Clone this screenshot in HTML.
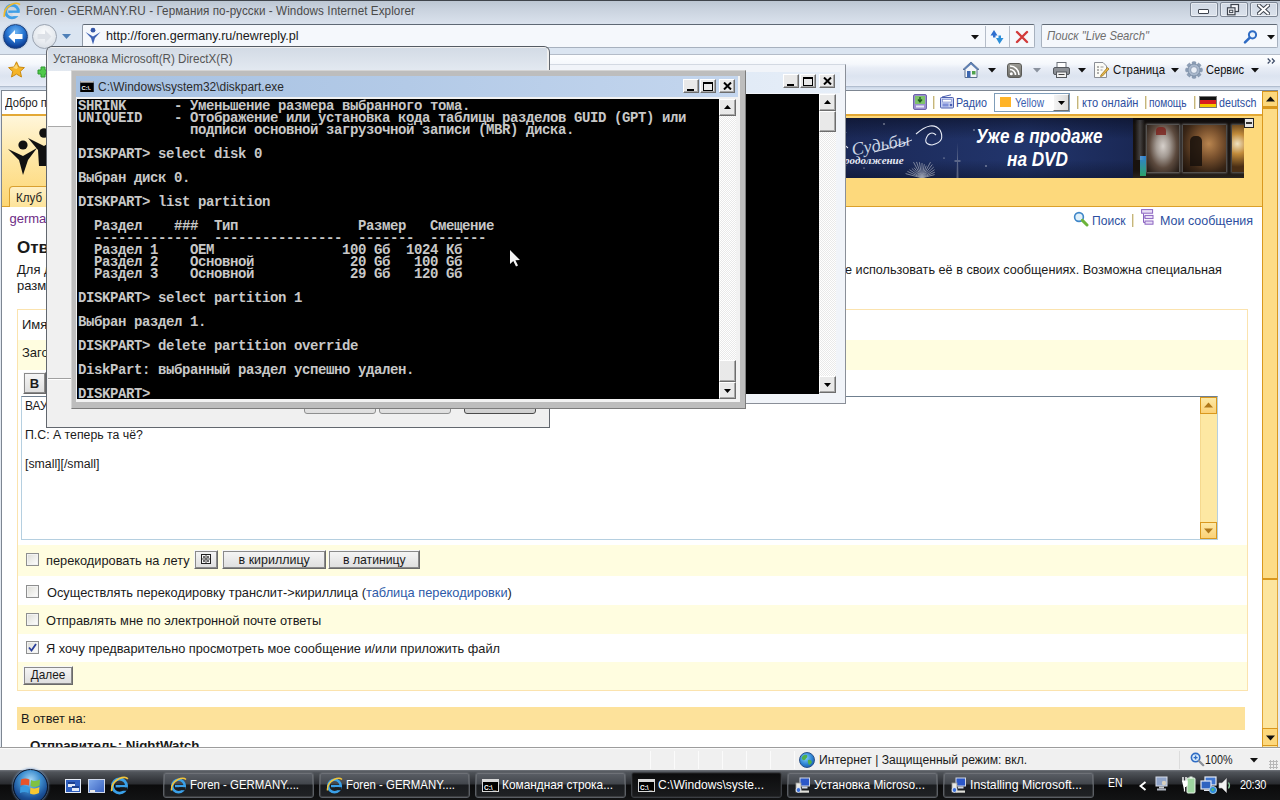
<!DOCTYPE html>
<html>
<head>
<meta charset="utf-8">
<title>Foren - GERMANY.RU</title>
<style>
*{box-sizing:border-box;margin:0;padding:0}
html,body{width:1280px;height:800px;overflow:hidden;background:#fff;font-family:"Liberation Sans",sans-serif;font-size:12px;color:#000}
.abs{position:absolute}
#ie{position:absolute;left:0;top:0;width:1280px;height:770px;background:#fff;overflow:hidden}
/* IE chrome */
#ietitle{left:0;top:0;width:1280px;height:22px;background:linear-gradient(#bcc6d2 0,#c9d2de 8px,#d9e1ec 22px);border-top:1px solid #3f444b}
#ietitle .t{left:26px;top:2px;font-size:13px;color:#4a4a4a;white-space:nowrap;letter-spacing:.1px}
.capbtn{top:1px;height:15px;width:28px;border:1px solid #7c8694;border-radius:2px;background:linear-gradient(#cfd8e3,#dbe2ec);box-shadow:inset 0 0 0 1px rgba(255,255,255,.45)}
#ienav{left:0;top:22px;width:1280px;height:30px;background:linear-gradient(#d9e1ec 0,#dbe5f1 6px,#dbe5f1 30px)}
#ietool{left:0;top:52px;width:1280px;height:38px;background:linear-gradient(#dbe5f1 0,#dbe5f1 2px,#b4bcc8 2px,#b4bcc8 3px,#fdfeff 3px,#f5f8fc 12px,#e8edf6 16px,#dce4f0 24px,#e4eaf5 32px,#e9eef7 34px)}
.box{background:#f5f8fc;border:1px solid #a3adba;border-radius:2px}
.ct{font-size:13px;color:#111;white-space:nowrap}
/* page */
#page{left:0;top:0;width:1280px;height:748px;background:#fff;overflow:hidden}
.pt{font-size:13px;color:#1a1a1a;white-space:nowrap}
.lk{font-size:13px;color:#2d4fa0;white-space:nowrap}
.sep{width:2px;height:13px;background:linear-gradient(90deg,#c4b57c 0,#c4b57c 1px,#ece3c2 1px)}
.row{left:18px;width:1229px;background:#fffde0}
.btn{background:linear-gradient(#f6f6f6,#dedede);border:1px solid;border-color:#f8f8f8 #6a6a6a #6a6a6a #f8f8f8;outline:1px solid #8a8a8a;outline-offset:-2px;font-size:13px;text-align:center;color:#1a1a1a;white-space:nowrap;line-height:16px}
.cb{width:13px;height:13px;background:linear-gradient(135deg,#dcdcd6,#fff);border:1px solid #8e8f8f;box-shadow:inset 0 0 0 1px #f2f2f2}
.sbb{width:17px;height:17px;background:linear-gradient(#fde9a6,#fbd176);border:1px solid #d9981e}
#status{left:0;top:748px;width:1280px;height:22px;background:#f0f0f0;border-top:1px solid #fbfbfb;box-shadow:0 -1px 0 #9c9c9c;z-index:2}
#taskbar{left:0;top:770px;width:1280px;height:30px;background:linear-gradient(#70747b 0,#50545a 2px,#3c3f44 8px,#292b2f 14px,#0b0b0c 15px,#121314 30px)}
.tb{top:2px;width:151px;height:26px;border:1px solid #5a5e64;border-radius:3px;background:linear-gradient(#5b5f66 0,#42464c 11px,#1a1c1f 12px,#212326 26px);box-shadow:inset 0 0 0 1px rgba(255,255,255,.12);color:#fff;font-size:13px;white-space:nowrap;overflow:hidden}
.tb span{position:absolute;left:26px;top:4px}
.tb .ti{position:absolute;left:6px;top:4px}
.tb.act{background:linear-gradient(#0c0c0d,#1a1b1d);border-color:#3c3f44;box-shadow:inset 0 0 0 1px rgba(255,255,255,.06)}
.wb{width:16px;height:14px;background:#e9e9e9;border:1px solid;border-color:#fff #6d6d6d #6d6d6d #fff;box-shadow:inset -1px -1px 0 #a8a8a8}
.dxb{width:72px;height:22px;border:1px solid #8e8f8f;border-radius:3px;background:linear-gradient(#f4f4f4,#dedede)}
#ietitle,#ienav,#ietool,#chromesep{z-index:2}
/* cmd */
.con{background:#000;color:#c8c8c8;font-family:"Liberation Mono",monospace;font-weight:bold;font-size:14px;letter-spacing:-.4px;line-height:12px;white-space:pre;overflow:hidden}
</style>
</head>
<body>
<div id="ie">
  <div id="ietitle" class="abs"><div class="t abs" style="left:26px;transform-origin:0 0;transform:scaleX(0.896)">Foren - GERMANY.RU - Германия по-русски - Windows Internet Explorer</div>
    <div class="capbtn abs" style="left:1190px"></div><div class="capbtn abs" style="left:1220px"></div><div class="capbtn abs" style="left:1250px"></div>
    <div class="abs" style="left:1198px;top:8px;width:11px;height:5px;background:#fff;border:1px solid #3e444e;border-radius:1px"></div>
    <svg class="abs" style="left:1226px;top:2px" width="14" height="13" viewBox="0 0 14 13"><rect x="5" y="1.5" width="7.5" height="7" fill="#f4f6f9" stroke="#3e444e" stroke-width="1.2"/><rect x="1.5" y="4.8" width="7.5" height="7" fill="#f4f6f9" stroke="#3e444e" stroke-width="1.2"/><rect x="3.6" y="7.2" width="3.2" height="2.4" fill="none" stroke="#3e444e" stroke-width="1"/></svg>
    <svg class="abs" style="left:1257px;top:3px" width="13" height="11" viewBox="0 0 13 11"><path d="M2 1.5 L11 9.5 M11 1.5 L2 9.5" stroke="#3e444e" stroke-width="4" stroke-linecap="square"/><path d="M2 1.5 L11 9.5 M11 1.5 L2 9.5" stroke="#fff" stroke-width="2" stroke-linecap="square"/></svg>
    <svg class="abs" style="left:3px;top:1px" width="18" height="18" viewBox="0 0 17 17"><circle cx="8.5" cy="9" r="6" fill="none" stroke="#3f9fe6" stroke-width="2.8"/><rect x="5" y="8" width="9" height="2.3" fill="#3f9fe6"/><rect x="9" y="10.3" width="7" height="3" fill="#dde3eb"/><path d="M1.2 14 Q0.5 6 8 2.3 Q13.5 0 16 2.5" fill="none" stroke="#f0b92e" stroke-width="1.6"/></svg>
  </div>
  <div id="ienav" class="abs">
    <!-- back -->
    <div class="abs" style="left:3px;top:2px;width:25px;height:25px;border-radius:50%;background:radial-gradient(circle at 50% 30%,#6fb4f0 0,#2a7ad6 40%,#0d3f96 75%,#0a2f78 100%);border:1px solid #1b3f7a;box-shadow:0 0 0 1px #c5d2e4"></div>
    <svg class="abs" style="left:3px;top:2px" width="25" height="25" viewBox="0 0 25 25"><path d="M5.5 12.5 L12 6 L12 10 L19.5 10 L19.5 15 L12 15 L12 19 Z" fill="#fff"/></svg>
    <!-- forward -->
    <div class="abs" style="left:32px;top:2px;width:25px;height:25px;border-radius:50%;background:radial-gradient(circle at 50% 35%,#fbfcfd 0,#e6eaef 55%,#cfd5dd 100%);border:1px solid #9aa3b0"></div>
    <svg class="abs" style="left:32px;top:2px" width="25" height="25" viewBox="0 0 25 25"><path d="M19.5 12.5 L13 6 L13 10 L5.5 10 L5.5 15 L13 15 L13 19 Z" fill="#dde1e7"/></svg>
    <svg class="abs" style="left:62px;top:12px" width="9" height="6"><path d="M0 0 L9 0 L4.5 5 Z" fill="#4f80b8"/></svg>
    <!-- address -->
    <div class="abs box" style="left:82px;top:2px;width:953px;height:24px;border-color:#5f6975 #a7b1be #a7b1be #8e98a6"></div>
    <svg class="abs" style="left:85px;top:5px" width="16" height="18" viewBox="0 0 16 18"><circle cx="8" cy="3.2" r="2.4" fill="#3557a8"/><path d="M0.5 5 L8 9.5 L15.5 5 L10 11 L8 17.5 L6 11 Z" fill="#3f63b5"/></svg>
    <div class="abs" style="left:106px;top:6px;font-size:13px;color:#1a1a1a;white-space:nowrap;transform-origin:0 0;transform:scaleX(0.968)">http://foren.germany.ru/newreply.pl</div>
    <svg class="abs" style="left:971px;top:13px" width="9" height="5"><path d="M0 0 L8 0 L4 4.5 Z" fill="#111"/></svg>
    <div class="abs" style="left:985px;top:4px;width:1px;height:21px;background:#b5bdc9"></div>
    <div class="abs" style="left:1009px;top:4px;width:1px;height:21px;background:#b5bdc9"></div>
    <svg class="abs" style="left:989px;top:7px" width="16" height="16" viewBox="0 0 16 16"><path d="M5 1 L1.5 6.5 L4 6.5 L4 8.5 L6.5 8.5 L6.5 6.5 L8.5 6.5 Z" fill="#2f6fcf"/><path d="M10.5 15 L14.5 9 L12 9 L12 6.5 L9.5 6.5 L9.5 9 L7 9 Z" fill="#2c8fd9"/></svg>
    <svg class="abs" style="left:1015px;top:8px" width="14" height="14" viewBox="0 0 14 14"><path d="M2 2 L12 12 M12 2 L2 12" stroke="#d23a3a" stroke-width="2.4" stroke-linecap="round"/></svg>
    <!-- search -->
    <div class="abs box" style="left:1041px;top:2px;width:237px;height:24px;border-color:#5f6975 #a7b1be #a7b1be #a7b1be"></div>
    <div class="abs" style="left:1047px;top:6px;font-size:13px;font-style:italic;color:#6d6d6d;white-space:nowrap;transform-origin:0 0;transform:scaleX(0.864)">Поиск "Live Search"</div>
    <svg class="abs" style="left:1243px;top:7px" width="16" height="16" viewBox="0 0 16 16"><circle cx="9.5" cy="5.8" r="3.6" fill="#eaf3fc" stroke="#2f6cc4" stroke-width="2"/><path d="M6.8 8.6 L2 13.4" stroke="#2f6cc4" stroke-width="2.6" stroke-linecap="round"/></svg>
    <svg class="abs" style="left:1267px;top:13px" width="8" height="5"><path d="M0 0 L8 0 L4 4.5 Z" fill="#111"/></svg>
  </div>
  <div id="ietool" class="abs">
    <svg class="abs" style="left:8px;top:9px" width="17" height="17" viewBox="0 0 17 17"><path d="M8.5 0.8 L10.9 6 L16.4 6.6 L12.3 10.4 L13.5 16 L8.5 13.1 L3.5 16 L4.7 10.4 L0.6 6.6 L6.1 6 Z" fill="#f5b427" stroke="#c98a12" stroke-width="1" stroke-linejoin="round"/><path d="M8.5 3 L10 6.8 L8.5 8 L5 7 Z" fill="#fbe08a" opacity=".8"/></svg>
    <svg class="abs" style="left:37px;top:14px" width="12" height="12" viewBox="0 0 12 12"><path d="M4 1 L8 1 L8 4 L11 4 L11 8 L8 8 L8 11 L4 11 L4 8 L1 8 L1 4 L4 4 Z" fill="#4fc94a" stroke="#2f9a2f" stroke-width="1"/></svg>
    <!-- command bar -->
    <svg class="abs" style="left:962px;top:9px" width="18" height="18" viewBox="0 0 18 18"><path d="M9 1 L17 8.5 L15 8.5 L15 16.5 L3 16.5 L3 8.5 L1 8.5 Z" fill="#f4f6f9" stroke="#5b6f8c" stroke-width="1"/><path d="M9 1 L17 8.5 L14.5 8.5 L9 3.6 L3.5 8.5 L1 8.5 Z" fill="#5d7fb3"/><rect x="5" y="10" width="3.5" height="6.5" fill="#3b66b0"/><rect x="10" y="10" width="3.5" height="3.5" fill="#4fa24c"/></svg>
    <svg class="abs tri" style="left:988px;top:16px" width="8" height="5"><path d="M0 0 L8 0 L4 4.5 Z" fill="#111"/></svg>
    <div class="abs" style="left:1007px;top:11px;width:15px;height:15px;border-radius:3px;background:linear-gradient(#9a9a94,#6d6d68);border:1px solid #5a5a56"></div>
    <svg class="abs" style="left:1007px;top:11px" width="15" height="15" viewBox="0 0 15 15"><circle cx="4.3" cy="10.7" r="1.5" fill="#fff"/><path d="M3 6.5 A5.5 5.5 0 0 1 8.5 12" fill="none" stroke="#fff" stroke-width="1.6"/><path d="M3 3 A9 9 0 0 1 12 12" fill="none" stroke="#fff" stroke-width="1.6"/></svg>
    <svg class="abs" style="left:1033px;top:16px" width="8" height="5"><path d="M0 0 L8 0 L4 4.5 Z" fill="#8a929e"/></svg>
    <svg class="abs" style="left:1052px;top:9px" width="19" height="18" viewBox="0 0 19 18"><rect x="5" y="1.5" width="9" height="6" fill="#fff" stroke="#6b7078" stroke-width="1"/><rect x="1.5" y="6.5" width="16" height="7" rx="1.5" fill="#8c9096" stroke="#55595f" stroke-width="1"/><rect x="4.5" y="11" width="10" height="5.5" fill="#f2f2f2" stroke="#55595f" stroke-width="1"/><rect x="6.5" y="13" width="6" height="1" fill="#444"/></svg>
    <svg class="abs" style="left:1078px;top:16px" width="8" height="5"><path d="M0 0 L8 0 L4 4.5 Z" fill="#111"/></svg>
    <svg class="abs" style="left:1092px;top:9px" width="18" height="18" viewBox="0 0 18 18"><path d="M2.5 1.5 L11 1.5 L14.5 5 L14.5 16.5 L2.5 16.5 Z" fill="#fbfbf6" stroke="#8b8f96" stroke-width="1"/><path d="M5 6 h2 M5 9 h2 M5 12 h2" stroke="#666" stroke-width="1.2"/><path d="M8.5 6 h3 M8.5 9 h2" stroke="#999" stroke-width="1"/><path d="M9 14 L15.5 6.5 L17 8 L10.5 15 L8.5 15.5 Z" fill="#e7b84a" stroke="#9a7320" stroke-width=".8"/></svg>
    <div class="abs ct" style="left:1113px;top:10px;transform-origin:0 0;transform:scaleX(0.883)">Страница</div>
    <svg class="abs" style="left:1171px;top:16px" width="8" height="5"><path d="M0 0 L8 0 L4 4.5 Z" fill="#111"/></svg>
    <svg class="abs" style="left:1185px;top:9px" width="18" height="18" viewBox="0 0 18 18"><g transform="translate(9 9)"><g fill="#8ea0b8" stroke="#6c7f98" stroke-width=".5"><rect x="-1.8" y="-8.3" width="3.6" height="16.6" rx=".8"/><rect x="-1.8" y="-8.3" width="3.6" height="16.6" rx=".8" transform="rotate(45)"/><rect x="-1.8" y="-8.3" width="3.6" height="16.6" rx=".8" transform="rotate(90)"/><rect x="-1.8" y="-8.3" width="3.6" height="16.6" rx=".8" transform="rotate(135)"/></g><circle r="6" fill="#a9b8cc" stroke="#6c7f98" stroke-width=".6"/><circle r="3.4" fill="#e9eef6" stroke="#7d8fa8" stroke-width=".8"/></g></svg>
    <div class="abs ct" style="left:1206px;top:10px;transform-origin:0 0;transform:scaleX(0.853)">Сервис</div>
    <svg class="abs" style="left:1251px;top:16px" width="8" height="5"><path d="M0 0 L8 0 L4 4.5 Z" fill="#111"/></svg>
    <svg class="abs" style="left:1267px;top:6px" width="9" height="6" viewBox="0 0 9 6"><path d="M.7 .5 L3.2 3 L.7 5.5 M4.9 .5 L7.4 3 L4.9 5.5" fill="none" stroke="#3c4a66" stroke-width="1.2"/></svg>
  </div>
  <div id="chromesep" class="abs" style="left:0;top:86px;width:1280px;height:4px;background:linear-gradient(#9aa7b9 0,#c9d5e6 1px,#dfe8f4 4px)"></div>
  <div id="page" class="abs">
    <!-- top white row -->
    <div class="abs pt" style="left:5px;top:96px;font-size:12px;transform-origin:0 0;transform:scaleX(0.929)">Добро пожаловать</div>
    <svg class="abs" style="left:913px;top:94px" width="14" height="16" viewBox="0 0 14 16"><rect x=".5" y=".5" width="13" height="15" rx="1.5" fill="#9b8fd0" stroke="#6d63a8"/><rect x="2" y="2" width="10" height="8" fill="#7fc36a"/><path d="M7 3 v4 M5 5.5 L7 8 L9 5.5" stroke="#1e5a1e" stroke-width="1.4" fill="none"/><rect x="3" y="11.5" width="8" height="2" fill="#e8e6f6"/></svg>
    <div class="abs sep" style="left:933px;top:96px"></div>
    <svg class="abs" style="left:940px;top:94px" width="14" height="15" viewBox="0 0 14 15"><path d="M2 3 L11 .8" stroke="#4b5fb0" stroke-width="1"/><rect x=".5" y="3.5" width="13" height="10.5" rx="1" fill="#c9d2f2" stroke="#4b5fb0"/><rect x="2.5" y="5.5" width="9" height="2.5" fill="#fff" stroke="#6f80c8" stroke-width=".6"/><rect x="2.5" y="9.5" width="6" height="3" fill="#7f8fd8"/><circle cx="11" cy="11" r="1.3" fill="#4b5fb0"/></svg>
    <div class="abs lk" style="left:956px;top:95px;transform-origin:0 0;transform:scaleX(0.826)">Радио</div>
    <div class="abs" style="left:994px;top:93px;width:76px;height:19px;background:#fff;border:1px solid #7f9db9"></div>
    <div class="abs" style="left:1000px;top:97px;width:11px;height:10px;background:#ffb428"></div>
    <div class="abs lk" style="left:1015px;top:95px;color:#3a5fb0;transform-origin:0 0;transform:scaleX(0.781)">Yellow</div>
    <div class="abs" style="left:1053px;top:94px;width:16px;height:17px;background:linear-gradient(90deg,#f4f4f4,#dcdcdc);border:1px solid;border-color:#fff #707070 #707070 #fff"></div>
    <svg class="abs" style="left:1058px;top:101px" width="7" height="4"><path d="M0 0 L7 0 L3.5 4 Z" fill="#000"/></svg>
    <div class="abs sep" style="left:1077px;top:96px"></div>
    <div class="abs lk" style="left:1082px;top:95px;transform-origin:0 0;transform:scaleX(0.854)">кто онлайн</div>
    <div class="abs sep" style="left:1145px;top:96px"></div>
    <div class="abs lk" style="left:1149px;top:95px;transform-origin:0 0;transform:scaleX(0.783)">помощь</div>
    <div class="abs sep" style="left:1194px;top:96px"></div>
    <div class="abs" style="left:1199px;top:96px;width:18px;height:12px;background:linear-gradient(#111 0,#111 33%,#d81e1e 33%,#d81e1e 66%,#f5c800 66%);border:1px solid #777"></div>
    <div class="abs lk" style="left:1219px;top:95px;transform-origin:0 0;transform:scaleX(0.823)">deutsch</div>
    <!-- header -->
    <div class="abs" style="left:2px;top:114px;width:1260px;height:93px;background:#fdd97c;border-top:2px solid #e3a835;border-bottom:1px solid #dba02a"></div>
    <div class="abs" style="left:2px;top:116px;width:300px;height:90px;background:linear-gradient(#fff6da 0,#fee7a6 45%,#fdd673 100%)"></div>
    <svg class="abs" style="left:6px;top:128px" width="60" height="50" viewBox="0 0 60 50"><circle cx="17" cy="17" r="4.6" fill="#111"/><path d="M2 21 L17 28 L31 20 L22 32 L17 47 L13 32 Z" fill="#111"/><circle cx="38" cy="5" r="4.8" fill="#111"/><path d="M22 10 L38 18 L54 8 L44 22 L41 38 L33 38 L32 22 Z" fill="#111"/></svg>
    <div class="abs" style="left:9px;top:186px;width:60px;height:21px;background:linear-gradient(#fff0c4,#fde39a);border:1px solid #d9a030;border-bottom:none;border-radius:4px 4px 0 0"></div>
    <div class="abs pt" style="left:16px;top:190px;font-size:13px;color:#222;transform-origin:0 0;transform:scaleX(0.889)">Клуб</div>
    <!-- banner -->
    <div class="abs" style="left:516px;top:118px;width:728px;height:60px;background:linear-gradient(90deg,#0d1330 0,#1b2957 45%,#22356c 70%,#1a2855 85%,#111a3c 100%);overflow:hidden">
      <div class="abs" style="left:0;top:0;width:728px;height:60px;background:linear-gradient(rgba(8,12,30,.55) 0,rgba(8,12,30,0) 35%,rgba(8,12,30,0) 70%,rgba(8,12,30,.45) 100%)"></div>
      <div class="abs" style="left:337px;top:8px;width:130px;height:50px;color:#dfe6f5;font-family:'Liberation Serif',serif;font-style:italic;font-size:18px;line-height:24px;white-space:nowrap;opacity:.9;transform:rotate(-10deg)">Судьбы</div>
      <div class="abs" style="left:322px;top:36px;color:#e6eaf4;font-family:'Liberation Serif',serif;font-style:italic;font-size:11px;font-weight:bold;white-space:nowrap">продолжение</div>
      <svg class="abs" style="left:318px;top:0" width="160" height="60" viewBox="0 0 160 60"><path d="M12 14 Q4 22 14 30" fill="none" stroke="#e8ecf6" stroke-width="1.1"/><path d="M82 16 Q98 2 106 12 Q112 24 98 27 Q88 26 94 17 Q98 13 102 17" fill="none" stroke="#e8ecf6" stroke-width="1.1"/><path d="M40 34 Q60 30 78 22" fill="none" stroke="#e8ecf6" stroke-width=".9"/><path d="M88 60 L100.6 56.6 M88 60 L100.8 54.2 M88 60 L100.5 51.7 M88 60 L99.7 49.1 M88 60 L98.3 46.5 M88 60 L96.5 44.1 M88 60 L92.2 47.7 M88 60 L90.3 46.2 M88 60 L88.0 45.0 M88 60 L85.4 44.2 M88 60 L82.5 43.9 M88 60 L79.5 44.1 M88 60 L80.1 49.7 M88 60 L77.8 50.4 M88 60 L75.5 51.7 M88 60 L73.4 53.4 M88 60 L71.6 55.6 " stroke="#aeb4c2" stroke-width=".8" opacity=".85"/><path d="M122.5 60 L123.5 24 L124.5 60 Z M120.5 42 h6 v2 h-6z" fill="#8c93aa" opacity=".55"/><g fill="#fff" opacity=".8"><circle cx="50" cy="6" r=".7"/><circle cx="140" cy="12" r=".7"/><circle cx="110" cy="40" r=".6"/><circle cx="152" cy="48" r=".7"/><circle cx="30" cy="50" r=".6"/></g></svg>
      <div class="abs" style="left:460px;top:8px;color:#fff;font-weight:bold;font-style:italic;font-size:20px;line-height:20px;white-space:nowrap;transform-origin:0 0;transform:scaleX(0.853)">Уже в продаже</div><div class="abs" style="left:491px;top:30px;color:#fff;font-weight:bold;font-style:italic;font-size:21px;line-height:21px;white-space:nowrap;transform-origin:0 0;transform:scaleX(0.818)">на DVD</div>
      <!-- photos -->
      <div class="abs" style="left:617px;top:0;width:111px;height:60px;background:linear-gradient(#0c0a0c 0,#17120e 12%,#1a130e 88%,#2a241e 100%)"></div>
      <div class="abs" style="left:631px;top:7px;width:32px;height:47px;background:radial-gradient(ellipse at 50% 45%,#d6d0cb 0,#a39a93 30%,#5c4a3e 60%,#1f1712 100%);box-shadow:0 0 2px 1px rgba(230,235,240,.45)"></div>
      <div class="abs" style="left:640px;top:9px;width:10px;height:8px;background:#7a1f1a;border-radius:4px 4px 0 0;opacity:.8"></div>
      <div class="abs" style="left:667px;top:7px;width:43px;height:47px;background:radial-gradient(ellipse at 60% 40%,#b9854f 0,#7c532f 35%,#3a2616 70%,#1a100a 100%);box-shadow:0 0 2px 1px rgba(230,235,240,.4)"></div>
      <div class="abs" style="left:674px;top:18px;width:12px;height:30px;background:#17100c;border-radius:5px 5px 0 0;opacity:.85"></div>
      <div class="abs" style="left:716px;top:7px;width:12px;height:47px;background:radial-gradient(circle at 45% 40%,#f0e2c0 0,#c08a3a 35%,#4a2e14 80%);box-shadow:0 0 2px 1px rgba(230,235,240,.35)"></div>
      <div class="abs" style="left:624px;top:38px;width:6px;height:20px;background:linear-gradient(#2f7fd0,#2fa36a)"></div>
      <div class="abs" style="left:619px;top:2px;width:10px;height:40px;background:linear-gradient(90deg,rgba(200,205,215,.0),rgba(200,205,215,.25),rgba(200,205,215,0))"></div>
    </div>
    <div class="abs" style="left:1244px;top:118px;width:10px;height:10px;background:#e6e6e6;border:1px solid #222"></div>
    <div class="abs" style="left:1246px;top:122px;width:6px;height:2px;background:#333"></div>
    <!-- breadcrumb row -->
    <div class="abs lk" style="left:9.5px;top:211px;color:#6d2c85">germany.ru</div>
    <svg class="abs" style="left:1073px;top:211px" width="16" height="16" viewBox="0 0 16 16"><circle cx="6" cy="6" r="4.4" fill="#dff0fb" stroke="#3f86c8" stroke-width="1.6"/><path d="M9.4 9.4 L14 14" stroke="#6cb33a" stroke-width="3" stroke-linecap="round"/></svg>
    <div class="abs lk" style="left:1092px;top:213px;transform-origin:0 0;transform:scaleX(0.930)">Поиск</div>
    <div class="abs sep" style="left:1132px;top:214px"></div>
    <svg class="abs" style="left:1141px;top:209px" width="15" height="17" viewBox="0 0 15 17"><rect x=".6" y=".6" width="11" height="3.6" fill="#e9dff6" stroke="#8a63c0"/><rect x="4" y="6.4" width="8" height="3.2" fill="#e9dff6" stroke="#8a63c0"/><rect x="4" y="12" width="8" height="3.2" fill="#e9dff6" stroke="#8a63c0"/><path d="M2.5 4.5 V13.5 H4 M2.5 8 H4" fill="none" stroke="#8a63c0"/></svg>
    <div class="abs lk" style="left:1160px;top:213px;transform-origin:0 0;transform:scaleX(0.960)">Мои сообщения</div>
    <!-- heading -->
    <div class="abs pt" style="left:17px;top:238px;font-size:17px;font-weight:bold">Ответ на сообщение</div>
    <div class="abs pt" style="left:17px;top:262px;width:1230px;white-space:nowrap">Для добавления картинки нужно сначала загрузить её на сервер, после чего можно будет<span style="position:absolute;left:828px;top:0;transform-origin:0 0;transform:scaleX(0.974)">е использовать её в своих сообщениях. Возможна специальная</span></div>
    <div class="abs pt" style="left:17px;top:278px">разметка</div>
    <!-- form table -->
    <div class="abs" style="left:17px;top:309px;width:1231px;height:382px;border:1px solid #fbe3ae;background:#fff"></div>
    <div class="abs row" style="top:340px;height:30px"></div>
    <div class="abs row" style="top:545px;height:31px"></div>
    <div class="abs row" style="top:605px;height:29px"></div>
    <div class="abs row" style="top:662px;height:28px"></div>
    <div class="abs pt" style="left:22px;top:317px">Имя</div>
    <div class="abs pt" style="left:22px;top:345px">Заголовок</div>
    <div class="abs btn" style="left:23px;top:372px;width:23px;height:22px;font-weight:bold;padding-top:3px">B</div>
    <!-- textarea -->
    <div class="abs" style="left:21px;top:396px;width:1197px;height:144px;background:#fff;border:1px solid #b5cfe0;border-top-color:#6f7f8f"></div>
    <div class="abs" style="left:1200px;top:397px;width:17px;height:142px;background:#fde8a3;border-left:1px solid #f5d98f"></div>
    <div class="abs sbb" style="left:1200px;top:397px"></div><svg class="abs" style="left:1204px;top:402px" width="9" height="6"><path d="M0 5.5 L4.5 0.5 L9 5.5 Z" fill="#b0781a"/></svg>
    <div class="abs sbb" style="left:1200px;top:522px"></div><svg class="abs" style="left:1204px;top:528px" width="9" height="6"><path d="M0 .5 L4.5 5.5 L9 .5 Z" fill="#b0781a"/></svg>
    <div class="abs pt" style="left:25px;top:399px;font-size:12px">ВАУ!</div>
    <div class="abs pt" style="left:25px;top:428px;font-size:12px;transform-origin:0 0;transform:scaleX(1.025)">П.С: А теперь та чё?</div>
    <div class="abs pt" style="left:25px;top:457px;font-size:12px;transform-origin:0 0;transform:scaleX(1.025)">[small][/small]</div>
    <!-- option rows -->
    <div class="abs cb" style="left:26px;top:553px"></div>
    <div class="abs pt" style="left:46px;top:553px;transform-origin:0 0;transform:scaleX(0.984)">перекодировать на лету</div>
    <div class="abs btn" style="left:194px;top:550px;width:24px;height:19px"></div>
    <svg class="abs" style="left:201px;top:554px" width="10" height="10" viewBox="0 0 10 10"><rect x=".5" y=".5" width="9" height="9" fill="#f4f4f4" stroke="#222"/><path d="M5 1 V9 M1 5 H9" stroke="#222" stroke-width=".8"/><rect x="2.2" y="2.2" width="1.6" height="1.6" fill="#222"/><rect x="6.2" y="2.2" width="1.6" height="1.6" fill="#222"/><rect x="2.2" y="6.2" width="1.6" height="1.6" fill="#222"/><rect x="6.2" y="6.2" width="1.6" height="1.6" fill="#222"/></svg>
    <div class="abs btn" style="left:222px;top:550px;width:104px;height:19px;line-height:17px"><span style="display:inline-block;transform:scaleX(.958)">в кириллицу</span></div>
    <div class="abs btn" style="left:328px;top:550px;width:92px;height:19px;line-height:17px"><span style="display:inline-block;transform:scaleX(.94)">в латиницу</span></div>
    <div class="abs cb" style="left:26px;top:585px"></div>
    <div class="abs pt" style="left:46.5px;top:585px;transform-origin:0 0 ;transform:scaleX(.985)">Осуществлять перекодировку транслит-&gt;кириллица (<span style="color:#2d5aa8">таблица перекодировки</span>)</div>
    <div class="abs cb" style="left:26px;top:613px"></div>
    <div class="abs pt" style="left:46px;top:613px;transform-origin:0 0;transform:scaleX(0.986)">Отправлять мне по электронной почте ответы</div>
    <div class="abs cb" style="left:26px;top:641px"></div>
    <svg class="abs" style="left:28px;top:643px" width="9" height="9" viewBox="0 0 9 9"><path d="M1 4.5 L3.5 7.5 L8 1" fill="none" stroke="#2a3f9a" stroke-width="1.8"/></svg>
    <div class="abs pt" style="left:46px;top:641px;transform-origin:0 0;transform:scaleX(0.982)">Я хочу предварительно просмотреть мое сообщение и/или приложить файл</div>
    <div class="abs btn" style="left:23px;top:666px;width:50px;height:19px"><span style="display:inline-block;transform:scaleX(.91)">Далее</span></div>
    <!-- reply -->
    <div class="abs" style="left:17px;top:707px;width:1228px;height:23px;background:#fde29b"></div>
    <div class="abs pt" style="left:21px;top:711px;transform-origin:0 0;transform:scaleX(0.980)">В ответ на:</div>
    <div class="abs pt" style="left:30px;top:738px;font-weight:bold;transform-origin:0 0;transform:scaleX(1.027)">Отправитель: NightWatch</div>
    <!-- page scrollbar -->
    <div class="abs" style="left:1262px;top:91px;width:16px;height:656px;background:#fde59e;border-left:1px solid #e0a63a;border-right:1px solid #e0a63a"></div>
    <div class="abs" style="left:1262px;top:107px;width:16px;height:473px;background:#fddc87;border:1px solid #d9981e;border-top-width:2px;border-bottom-width:2px"></div>
    <div class="abs" style="left:1262px;top:91px;width:16px;height:16px;background:#fdd87c;border:1px solid #d9981e"></div>
    <svg class="abs" style="left:1266px;top:96px" width="9" height="6"><path d="M0 5.5 L4.5 0.5 L9 5.5 Z" fill="#111"/></svg>
    <div class="abs" style="left:1262px;top:728px;width:16px;height:18px;background:#fdd87c;border:1px solid #d9981e"></div>
    <svg class="abs" style="left:1266px;top:735px" width="9" height="6"><path d="M0 .5 L4.5 5.5 L9 .5 Z" fill="#111"/></svg>
    <!-- frame borders -->
    <div class="abs" style="left:0;top:90px;width:2px;height:658px;background:#e3e9f1;border-right:1px solid #7d8692"></div>
    <div class="abs" style="left:1278px;top:90px;width:2px;height:658px;background:#e3e9f1"></div>
    <div class="abs" style="left:2px;top:90px;width:1276px;height:1px;background:#7d8692"></div>
  </div>
  <div id="status" class="abs">
    <div class="abs" style="left:650px;top:2px;width:1px;height:18px;background:#dcdcdc;border-right:1px solid #fbfbfb"></div><div class="abs" style="left:674px;top:2px;width:1px;height:18px;background:#dcdcdc;border-right:1px solid #fbfbfb"></div><div class="abs" style="left:698px;top:2px;width:1px;height:18px;background:#dcdcdc;border-right:1px solid #fbfbfb"></div><div class="abs" style="left:722px;top:2px;width:1px;height:18px;background:#dcdcdc;border-right:1px solid #fbfbfb"></div><div class="abs" style="left:746px;top:2px;width:1px;height:18px;background:#dcdcdc;border-right:1px solid #fbfbfb"></div><div class="abs" style="left:770px;top:2px;width:1px;height:18px;background:#dcdcdc;border-right:1px solid #fbfbfb"></div><div class="abs" style="left:794px;top:2px;width:1px;height:18px;background:#dcdcdc;border-right:1px solid #fbfbfb"></div>
    <div class="abs" style="left:799px;top:3px;width:16px;height:16px;border-radius:50%;background:radial-gradient(circle at 40% 35%,#7fd0ff 0,#2a7fd0 55%,#114a98 100%);border:1px solid #27508a"></div>
    <svg class="abs" style="left:799px;top:3px" width="16" height="16" viewBox="0 0 16 16"><path d="M3 5 Q5 2 8 3 Q9 5 7 6.5 Q6 9 4 8 Q2.5 7 3 5 Z M9 8 Q12 7 13 10 Q12 13 10 13 Q8.5 11 9 8 Z" fill="#4fb04a"/></svg>
    <div class="abs" style="left:819px;top:4px;font-size:12.5px;color:#1a1a1a;white-space:nowrap;transform-origin:0 0;transform:scaleX(0.970)">Интернет | Защищенный режим: вкл.</div>
    <div class="abs" style="left:1179px;top:2px;width:1px;height:18px;background:#dcdcdc"></div>
    <svg class="abs" style="left:1190px;top:3px" width="15" height="15" viewBox="0 0 15 15"><circle cx="5.6" cy="5.6" r="4.2" fill="#d8ebfb" stroke="#2f6cc4" stroke-width="1.6"/><path d="M3.6 5.6 h4 M5.6 3.6 v4" stroke="#2f6cc4" stroke-width="1.4"/><path d="M9 9 L13.2 13.2" stroke="#8a8f98" stroke-width="2.2" stroke-linecap="round"/></svg>
    <div class="abs" style="left:1205px;top:4px;font-size:12.5px;color:#1a1a1a;transform-origin:0 0;transform:scaleX(0.860)">100%</div>
    <svg class="abs" style="left:1250px;top:9px" width="8" height="5"><path d="M0 0 L8 0 L4 4.5 Z" fill="#111"/></svg>
    <div class="abs" style="left:1269px;top:11px;width:9px;height:9px;background:radial-gradient(circle,#b8b8b8 1px,transparent 1.2px) 0 0/3px 3px"></div>
  </div>
</div>

<div id="wins" class="abs" style="left:0;top:0;width:0;height:0;z-index:5">
<!-- background cmd -->
<div class="abs" style="left:300px;top:64px;width:546px;height:340px;background:#f1f4f9;border:1px solid;border-color:#d3d9e2 #8a8f98 #8a8f98 #c2c8d0"></div>
<div class="abs" style="left:304px;top:72px;width:536px;height:21px;background:linear-gradient(90deg,#cddcee,#e6eef8)"></div>
<div class="abs wb" style="left:783px;top:74px"></div><div class="abs" style="left:787px;top:84px;width:7px;height:2px;background:#000"></div><div class="abs wb" style="left:800px;top:74px"></div><div class="abs" style="left:803px;top:77px;width:10px;height:9px;border:1px solid #000;border-top-width:2px"></div><div class="abs wb" style="left:819px;top:74px"></div><svg class="abs" style="left:823px;top:77px" width="9" height="8" viewBox="0 0 9 8"><path d="M1 0.5 L8 7.5 M8 0.5 L1 7.5" stroke="#000" stroke-width="2"/></svg>
<div class="abs" style="left:704px;top:94px;width:115px;height:300px;background:#000"></div>
<div class="abs" style="left:819px;top:94px;width:17px;height:299px;background-color:#fff;background-image:linear-gradient(45deg,#e9e9e9 25%,transparent 25%,transparent 75%,#e9e9e9 75%),linear-gradient(45deg,#e9e9e9 25%,transparent 25%,transparent 75%,#e9e9e9 75%);background-size:2px 2px;background-position:0 0,1px 1px"></div><div class="abs wb" style="left:819px;top:94px;width:17px;height:17px"></div><svg class="abs" style="left:824px;top:100px" width="7" height="4"><path d="M0 4 L3.5 0 L7 4 Z" fill="#000"/></svg><div class="abs wb" style="left:819px;top:376px;width:17px;height:17px"></div><svg class="abs" style="left:824px;top:383px" width="7" height="4"><path d="M0 0 L3.5 4 L7 0 Z" fill="#000"/></svg><div class="abs wb" style="left:819px;top:111px;width:17px;height:21px"></div>
<!-- DirectX dialog -->
<div class="abs" style="left:46px;top:46px;width:504px;height:382px;background:#f0f0f0;border:1px solid #62676e;border-top-color:#555b63;border-radius:6px 6px 0 0;overflow:hidden">
  <div class="abs" style="left:1px;top:1px;width:499px;height:23px;background:linear-gradient(#d3dbe5,#e3e9f1)"></div>
  <div class="abs" style="left:6px;top:5px;font-size:12.5px;color:#555;white-space:nowrap;transform-origin:0 0;transform:scaleX(0.933)">Установка Microsoft(R) DirectX(R)</div>
  <div class="abs" style="left:1px;top:24px;width:499px;height:56px;background:#fff;border-bottom:1px solid #a9a9a9"></div>
  <div class="abs" style="left:1px;top:331px;width:500px;height:2px;background:linear-gradient(#a0a0a0 50%,#fff 50%)"></div><div class="abs dxb" style="left:257px;top:345px"></div>
  <div class="abs dxb" style="left:332px;top:345px"></div>
  <div class="abs dxb" style="left:417px;top:345px;border-color:#4a4a4a;background:linear-gradient(#e2e2e2,#cfcfcf)"></div>
</div>
<!-- front cmd -->
<div class="abs" style="left:71px;top:70px;width:675px;height:339px;background:#bdbdbd;border:1px solid;border-color:#d4d4d4 #7c7c7c #7c7c7c #d4d4d4"></div>
<div class="abs" style="left:76px;top:76px;width:664px;height:326px;background:#f2f2f2"></div>
<div class="abs" style="left:76px;top:76px;width:662px;height:21px;background:linear-gradient(90deg,#a6c1e2 0,#b3cae7 50%,#c4d6ee 100%)"></div>
<svg class="abs" style="left:80px;top:81px" width="14" height="11" viewBox="0 0 16 13"><rect width="16" height="13" fill="#000"/><rect x="0" y="0" width="16" height="2" fill="#c0c0c0"/><text x="1.5" y="10.5" font-family="Liberation Sans" font-size="7" font-weight="bold" fill="#fff">C:\.</text></svg>
<div class="abs" style="left:98px;top:80px;font-size:12.5px;color:#2a2a2a;white-space:nowrap;transform-origin:0 0;transform:scaleX(0.956)">C:\Windows\system32\diskpart.exe</div>
<div class="abs wb" style="left:683px;top:79px"></div><div class="abs" style="left:687px;top:89px;width:7px;height:2px;background:#000"></div><div class="abs wb" style="left:700px;top:79px"></div><div class="abs" style="left:703px;top:82px;width:10px;height:9px;border:1px solid #000;border-top-width:2px"></div><div class="abs wb" style="left:719px;top:79px"></div><svg class="abs" style="left:723px;top:82px" width="9" height="8" viewBox="0 0 9 8"><path d="M1 0.5 L8 7.5 M8 0.5 L1 7.5" stroke="#000" stroke-width="2"/></svg>
<div class="abs con" style="left:77px;top:99px;width:642px;height:300px;padding:1px 0 0 1px">SHRINK      - Уменьшение размера выбранного тома.
UNIQUEID    - Отображение или установка кода таблицы разделов GUID (GPT) или
              подписи основной загрузочной записи (MBR) диска.

DISKPART&gt; select disk 0

Выбран диск 0.

DISKPART&gt; list partition

  Раздел    ###  Тип               Размер   Смещение
  -------------  ----------------  -------  -------
  Раздел 1    OEM                100 Gб  1024 Кб
  Раздел 2    Основной            20 Gб   100 Gб
  Раздел 3    Основной            29 Gб   120 Gб

DISKPART&gt; select partition 1

Выбран раздел 1.

DISKPART&gt; delete partition override

DiskPart: выбранный раздел успешно удален.

DISKPART&gt;</div>
<div class="abs" style="left:719px;top:99px;width:17px;height:300px;background-color:#fff;background-image:linear-gradient(45deg,#e9e9e9 25%,transparent 25%,transparent 75%,#e9e9e9 75%),linear-gradient(45deg,#e9e9e9 25%,transparent 25%,transparent 75%,#e9e9e9 75%);background-size:2px 2px;background-position:0 0,1px 1px"></div><div class="abs wb" style="left:719px;top:99px;width:17px;height:17px"></div><svg class="abs" style="left:724px;top:105px" width="7" height="4"><path d="M0 4 L3.5 0 L7 4 Z" fill="#000"/></svg><div class="abs wb" style="left:719px;top:382px;width:17px;height:17px"></div><svg class="abs" style="left:724px;top:389px" width="7" height="4"><path d="M0 0 L3.5 4 L7 0 Z" fill="#000"/></svg><div class="abs wb" style="left:719px;top:360px;width:17px;height:22px"></div>
<!-- cursor -->
<svg class="abs" style="left:510px;top:250px" width="11" height="18" viewBox="0 0 11 18"><path d="M0 0 L0 14 L3.3 11 L6 16.6 L8 15.6 L5.4 10.2 L10 10 Z" fill="#f4f4f4"/></svg>
</div>
<div id="taskbar" class="abs" style="z-index:6">
  <div class="abs" style="left:13px;top:-1px;width:35px;height:35px;border-radius:50%;background:radial-gradient(circle at 50% 30%,#a6d6f5 0,#3f8fd0 35%,#1a4f96 65%,#0c2a55 100%);border:1px solid #0a1a33;box-shadow:0 0 2px 1px rgba(120,160,210,.6)"></div>
  <svg class="abs" style="left:20px;top:6px" width="21" height="20" viewBox="0 0 21 20"><path d="M1 3.5 Q5 1.5 9.5 3.5 L9 9.5 Q5 7.8 0.5 9.5 Z" fill="#e8542a"/><path d="M11 4 Q15 6 20 3.5 L19.5 9.5 Q15 12 10.5 10 Z" fill="#7fc241"/><path d="M0.4 11 Q5 9.2 9 11 L8.5 17 Q4.5 15.2 0 17 Z" fill="#3a9ae0"/><path d="M10.4 11.5 Q15 13.5 19.4 11 L19 17 Q14.5 19.5 10 17.5 Z" fill="#f7c631"/></svg>
  <!-- quick launch -->
  <div class="abs" style="left:65px;top:9px;width:16px;height:14px;background:#2f5fc0;border:1px solid #e6ecf6"></div>
  <div class="abs" style="left:68px;top:12px;width:7px;height:5px;background:#dfe8f8;border-top:2px solid #1b3f8f"></div>
  <div class="abs" style="left:72px;top:16px;width:7px;height:5px;background:#dfe8f8;border-top:2px solid #1b3f8f"></div>
  <div class="abs" style="left:88px;top:9px;width:17px;height:14px;background:linear-gradient(135deg,#7fa8ea,#3a63c2);border:1px solid #cfd8ea"></div>
  <div class="abs" style="left:90px;top:20px;width:5px;height:2px;background:#e8e8e8"></div>
  <svg class="abs" style="left:110px;top:6px" width="19" height="19" viewBox="0 0 17 17"><circle cx="8.5" cy="9" r="6.3" fill="none" stroke="#3aa0e8" stroke-width="2.6"/><rect x="5" y="8" width="9" height="2.2" fill="#3aa0e8"/><rect x="9" y="10.2" width="6.5" height="3" fill="#15171a"/><path d="M1.5 13.5 Q1 6 8 2.5 Q13.5 0 16 2.5" fill="none" stroke="#f2c53a" stroke-width="1.5"/></svg>
<div class="abs tb" style="left:163px"><svg class="ti" width="17" height="17" viewBox="0 0 17 17"><circle cx="8.5" cy="9" r="6.3" fill="none" stroke="#3aa0e8" stroke-width="2.6"/><rect x="5" y="8" width="9" height="2.2" fill="#3aa0e8"/><rect x="9" y="10.2" width="6.5" height="3" fill="#1b1d20"/><path d="M1.5 13.5 Q1 6 8 2.5 Q13.5 0 16 2.5" fill="none" stroke="#f2c53a" stroke-width="1.5"/></svg><span style="left:26px;transform-origin:0 0;transform:scaleX(0.879)">Foren - GERMANY....</span></div><div class="abs tb" style="left:319px"><svg class="ti" width="17" height="17" viewBox="0 0 17 17"><circle cx="8.5" cy="9" r="6.3" fill="none" stroke="#3aa0e8" stroke-width="2.6"/><rect x="5" y="8" width="9" height="2.2" fill="#3aa0e8"/><rect x="9" y="10.2" width="6.5" height="3" fill="#1b1d20"/><path d="M1.5 13.5 Q1 6 8 2.5 Q13.5 0 16 2.5" fill="none" stroke="#f2c53a" stroke-width="1.5"/></svg><span style="left:26px;transform-origin:0 0;transform:scaleX(0.879)">Foren - GERMANY....</span></div><div class="abs tb" style="left:475px"><svg class="ti" width="17" height="17" viewBox="0 0 17 17"><rect x=".5" y="2.5" width="16" height="12" fill="#000" stroke="#d8d8d8" stroke-width="1"/><rect x="1" y="3" width="15" height="2" fill="#d8d8d8"/><text x="2" y="12.5" font-family="Liberation Sans" font-size="6.5" font-weight="bold" fill="#fff">C:\_</text></svg><span style="left:26px;transform-origin:0 0;transform:scaleX(0.912)">Командная строка...</span></div><div class="abs tb act" style="left:631px"><svg class="ti" width="17" height="17" viewBox="0 0 17 17"><rect x=".5" y="2.5" width="16" height="12" fill="#000" stroke="#d8d8d8" stroke-width="1"/><rect x="1" y="3" width="15" height="2" fill="#d8d8d8"/><text x="2" y="12.5" font-family="Liberation Sans" font-size="6.5" font-weight="bold" fill="#fff">C:\_</text></svg><span style="left:26px;transform-origin:0 0;transform:scaleX(0.929)">C:\Windows\syste...</span></div><div class="abs tb" style="left:787px"><svg class="ti" width="17" height="17" viewBox="0 0 17 17"><rect x="6" y="1" width="9.5" height="8" fill="#2b57c8" stroke="#cfd6e4" stroke-width="1"/><rect x="8" y="9.5" width="5.5" height="2" fill="#cfd6e4"/><rect x="2" y="6" width="5" height="9" fill="#e8e8e4" stroke="#9a9a96" stroke-width=".8"/><circle cx="4.5" cy="13" r="2.4" fill="#3a6fd8" stroke="#fff" stroke-width=".8"/><rect x="6" y="13.5" width="9" height="2.2" fill="#e0e0da"/></svg><span style="left:26px;transform-origin:0 0;transform:scaleX(0.914)">Установка Microso...</span></div><div class="abs tb" style="left:943px"><svg class="ti" width="17" height="17" viewBox="0 0 17 17"><rect x="6" y="1" width="9.5" height="8" fill="#2b57c8" stroke="#cfd6e4" stroke-width="1"/><rect x="8" y="9.5" width="5.5" height="2" fill="#cfd6e4"/><rect x="2" y="6" width="5" height="9" fill="#e8e8e4" stroke="#9a9a96" stroke-width=".8"/><circle cx="4.5" cy="13" r="2.4" fill="#3a6fd8" stroke="#fff" stroke-width=".8"/><rect x="6" y="13.5" width="9" height="2.2" fill="#e0e0da"/></svg><span style="left:26px;transform-origin:0 0;transform:scaleX(0.945)">Installing Microsoft...</span></div>
  <div class="abs" style="left:1108px;top:6px;font-size:12px;color:#fff;transform-origin:0 0;transform:scaleX(0.870)">EN</div>
  <svg class="abs" style="left:1139px;top:11px" width="8" height="10" viewBox="0 0 8 10"><path d="M6.5 1 L1.5 5 L6.5 9" fill="none" stroke="#fff" stroke-width="2"/></svg>
  <!-- tray icons -->
  <svg class="abs" style="left:1154px;top:6px" width="16" height="18" viewBox="0 0 16 18"><rect x="2" y="1" width="11" height="9" fill="#8fa3c8" stroke="#d8deea" stroke-width="1"/><rect x="5" y="10.5" width="5" height="2" fill="#c8ccd4"/><rect x="3" y="12.5" width="9" height="2" fill="#aeb4c0"/><circle cx="10" cy="7" r="2.2" fill="#d8d0c0"/></svg>
  <svg class="abs" style="left:1181px;top:5px" width="16" height="20" viewBox="0 0 16 20"><rect x="6" y="3" width="8" height="15" rx="1" fill="#9fd6a0" stroke="#e8f4e8" stroke-width="1"/><rect x="8.5" y="1.5" width="3" height="2" fill="#e8f4e8"/><path d="M2 2 v4 M5 2 v4" stroke="#fff" stroke-width="1.4"/><path d="M1 6 h5 v3 q0 2.5 -2.5 2.5 v5" fill="#fff" stroke="#fff" stroke-width="1.2"/></svg>
  <svg class="abs" style="left:1200px;top:6px" width="18" height="19" viewBox="0 0 18 19"><rect x="5" y="1" width="11" height="8" fill="#3f76d0" stroke="#e6ecf6" stroke-width="1.2"/><rect x="1" y="5" width="10" height="8" fill="#2f63c0" stroke="#e6ecf6" stroke-width="1.2"/><rect x="4" y="13.5" width="5" height="1.5" fill="#dfe4ee"/><circle cx="13" cy="14" r="3.6" fill="#2d8ad8" stroke="#bfe0f8" stroke-width=".8"/><path d="M11.5 13 q1.5 -1.5 2.5 0 q0 2 -2 2 z" fill="#5ac05a"/></svg>
  <svg class="abs" style="left:1218px;top:7px" width="15" height="17" viewBox="0 0 15 17"><path d="M1 6 L4 6 L8.5 1.5 L8.5 15.5 L4 11 L1 11 Z" fill="#f2f2f2" stroke="#bdbdbd" stroke-width=".6"/><path d="M10.5 5.5 Q12.5 8.5 10.5 11.5" fill="none" stroke="#8fd0a0" stroke-width="1.2"/></svg>
  <div class="abs" style="left:1240px;top:8px;font-size:12px;color:#fff;letter-spacing:-.3px;transform-origin:0 0;transform:scaleX(0.911)">20:30</div>
</div>
</body>
</html>
